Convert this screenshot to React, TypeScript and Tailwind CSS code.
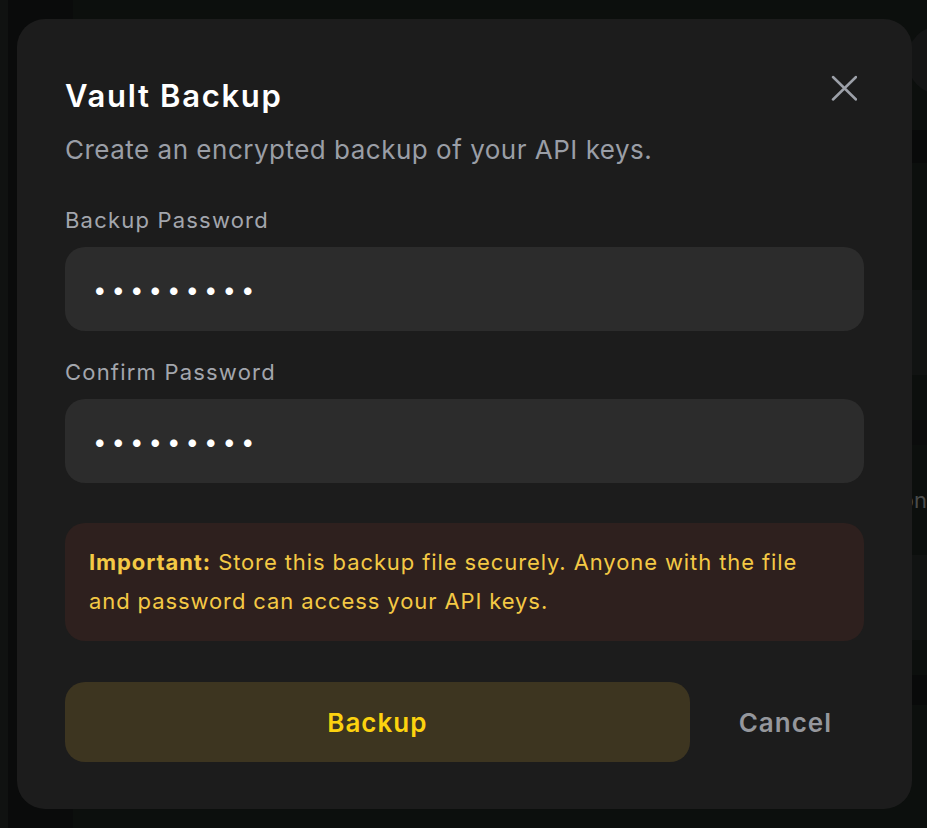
import React, { useState } from "react";

const Dots: React.FC<{ value: string; onChange: (v: string) => void }> = ({ value, onChange }) => (
  <input
    type="password"
    value={value}
    onChange={(e) => onChange(e.target.value)}
    className="h-[84px] w-full rounded-[20px] bg-[#2c2c2c] pl-[28px] pr-6 text-[24px] tracking-[5px] text-white outline-none"
  />
);

export default function App() {
  const [pass, setPass] = useState("secret123");
  const [confirm, setConfirm] = useState("secret123");

  return (
    <div
      className="relative h-[828px] w-[927px] overflow-hidden bg-[#0f1311]"
      style={{ fontFamily: "Inter, 'Noto Sans', sans-serif" }}
    >
      {/* page behind the dialog */}
      <div className="flex h-full">
        <div className="w-[8px] bg-[#141716]" />
        <div className="w-[65px] bg-[#0d0e0e]" />
        <div className="flex flex-1 flex-col">
          <div className="flex h-[130px] justify-end pt-[25px]">
            <div className="h-[70px] w-[70px] translate-x-[50px] rounded-full bg-[#1a1b1b]" />
          </div>
          <div className="h-[33px] bg-[#0c0d0d]" />
          <div className="h-[127px]" />
          <div className="h-[85px] bg-[#161817]" />
          <div className="h-[45px]" />
          <div className="h-[25px] bg-[#0e0f0f]" />
          <div className="flex h-[110px] items-center justify-end text-[22px] text-[#5d605f]">Connection</div>
          <div className="h-[85px] bg-[#161817]" />
          <div className="h-[35px]" />
          <div className="h-[30px] bg-[#0c0d0d]" />
        </div>
      </div>
      <div className="absolute inset-0 bg-black/20" />

      {/* dialog */}
      <div className="absolute left-[17px] top-[19px] w-[895px] rounded-[28px] bg-[#1c1c1c] px-12 pb-[47px] pt-[59px]">
        <button className="absolute right-[55px] top-[56px] text-[#9ca0a8]" aria-label="Close">
          <svg width="26" height="26" viewBox="0 0 26 26" fill="none" stroke="currentColor" strokeWidth="2.5" strokeLinecap="round">
            <path d="M2 2 25 24.5M25 2 2 24.5" />
          </svg>
        </button>

        <h2 className="text-[31px] font-semibold leading-[36px] tracking-[1.7px] text-white">Vault Backup</h2>
        <p className="mt-[20px] text-[26px] leading-[32px] tracking-[0.5px] text-[#9a9ea6]">Create an encrypted backup of your API keys.</p>

        <label className="mt-[40px] block text-[22px] leading-[28px] tracking-[1.2px] text-[#a3a6ad]">Backup Password</label>
        <div className="mt-[13px]">
          <Dots value={pass} onChange={setPass} />
        </div>

        <label className="mt-[27px] block text-[22px] leading-[28px] tracking-[1.2px] text-[#a3a6ad]">Confirm Password</label>
        <div className="mt-[13px]">
          <Dots value={confirm} onChange={setConfirm} />
        </div>

        <div className="mt-[40px] rounded-[20px] bg-[#2e201e] px-6 py-[20px] text-[22px] leading-[39px] tracking-[0.9px] text-[#f4c945]">
          <span className="font-bold">Important:</span> Store this backup file securely. Anyone with the file and password can access your API keys.
        </div>

        <div className="mt-[41px] flex items-center gap-[17px]">
          <button className="h-[80px] flex-1 rounded-[20px] bg-[#3d3520] text-[26px] font-semibold tracking-[1px] text-[#fcd20f]">Backup</button>
          <button className="px-8 text-[26px] font-semibold tracking-[1px] text-[#95979c]">Cancel</button>
        </div>
      </div>
    </div>
  );
}
